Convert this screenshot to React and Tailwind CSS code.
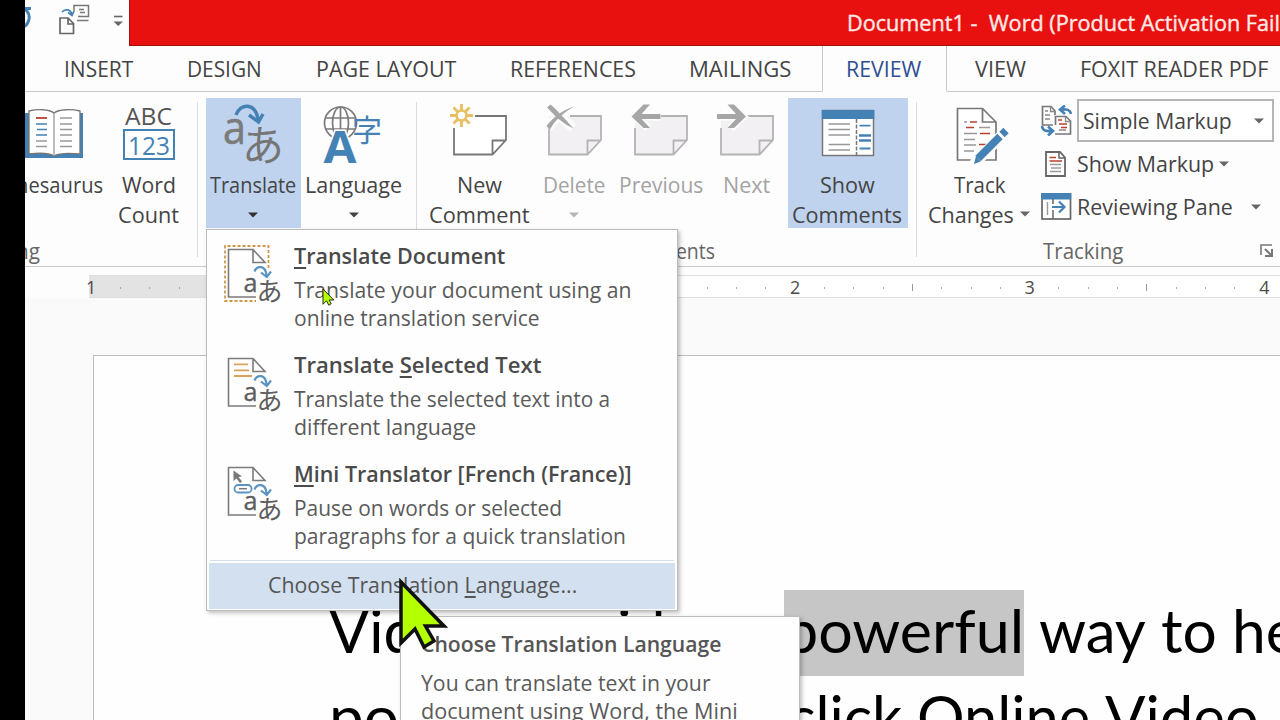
import React, { useLayoutEffect, useRef, useState } from 'react';

// One line of text, condensed or stretched to the width of its box
const Fit = ({ className = '', children }) => {
  const box = useRef(null);
  const text = useRef(null);
  const [scale, setScale] = useState(1);

  useLayoutEffect(() => {
    setScale(box.current.clientWidth / text.current.offsetWidth);
  }, []);

  return (
    <span ref={box} className={`block shrink-0 whitespace-nowrap ${className}`}>
      <span ref={text} className="inline-block origin-left" style={{ transform: `scaleX(${scale})` }}>
        {children}
      </span>
    </span>
  );
};

const Caret = ({ className = 'text-[#666]' }) => (
  <svg className={`h-[6px] w-[10px] shrink-0 ${className}`} viewBox="0 0 10 6">
    <path d="M0 0.5H10L5 5.5Z" fill="currentColor" />
  </svg>
);

const Separator = () => <div className="mt-[10px] h-[155px] w-px shrink-0 bg-[#dcdcdc]" />;

/* ---------- Ribbon icons ---------- */

const BookIcon = () => (
  <svg className="h-[72px] w-[60px]" viewBox="0 0 60 72">
    <path d="M0 15H58V60H0Z" fill="#4481b4" />
    <path d="M4 13C12 11 24 11 29 15C34 11 47 11 55 13V56C45 55 34 55 29 58C24 55 12 55 4 56Z" fill="#fff" stroke="#777" strokeWidth="1.3" />
    <path d="M29 15V58" stroke="#999" strokeWidth="1.3" />
    <path d="M11 20H22" stroke="#b8412f" strokeWidth="1.8" />
    <path d="M11 26H22M12 31.500H22M11 37H22" stroke="#4481b4" strokeWidth="1.5" />
    <path d="M11 43H22M11 48.500H22M35 20H47M35 26H47M35 31.500H47M35 37H47M35 43H47M35 48.500H47" stroke="#999" strokeWidth="1.300" />
  </svg>
);

const WordCountIcon = () => (
  <div className="flex h-[72px] flex-col items-center pt-[6px] text-[#555]">
    <Fit className="h-[25px] w-[47px] text-[23px] leading-[25px]">ABC</Fit>
    <div className="flex h-[31px] w-[52px] justify-center border-2 border-[#4481b4] bg-white text-[#4481b4]">
      <Fit className="w-[42px] text-[25px] leading-[28px]">123</Fit>
    </div>
  </div>
);

const TranslateIcon = () => (
  <svg className="h-[72px] w-[95px]" viewBox="0 0 95 72">
    <text x="17" y="46" fontSize="45" textLength="23" lengthAdjust="spacingAndGlyphs" fill="#7b7b7b" stroke="#7b7b7b" strokeWidth="0.600">a</text>
    <text x="36" y="63" fontSize="42" fontWeight="400" fill="#757575" fontFamily="Noto Sans CJK JP, sans-serif">あ</text>
    <path d="M30 17C34 5 50 4 52 22" fill="none" stroke="#4481b4" strokeWidth="3.500" />
    <path d="M43 17L52.500 24L57 16" fill="none" stroke="#4481b4" strokeWidth="3.500" />
  </svg>
);

const LanguageIcon = () => (
  <svg className="h-[72px] w-[106px]" viewBox="0 0 106 72">
    <g fill="none" stroke="#7b7b7b" strokeWidth="1.700">
      <circle cx="39.500" cy="25" r="16" />
      <ellipse cx="39.500" cy="25" rx="8" ry="16" />
      <path d="M24 20H55M24 31H55M39.500 9V40" />
    </g>
    <text x="22.500" y="64.500" fontSize="44" fontWeight="700" textLength="33" lengthAdjust="spacingAndGlyphs" fill="#4481b4" stroke="#fdfdfd" strokeWidth="3" paintOrder="stroke">A</text>
    <text x="51" y="43" fontSize="30" fontWeight="400" fill="#4481b4" fontFamily="Noto Sans CJK JP, sans-serif">字</text>
  </svg>
);

const NoteIcon = ({ muted, children }) => (
  <svg className="h-[72px] w-[64px]" viewBox="0 0 64 72">
    <path d="M6 18H58V42L44.500 56.500H6Z" fill={muted ? '#f3f0f4' : '#fff'} />
    <path d="M27 18H58V42L44.500 56.500H6V30M58 42.500H44.500V56.500" fill="none" stroke={muted ? '#b3b3b3' : '#777'} strokeWidth="1.800" />
    {children}
  </svg>
);

const NewNoteIcon = () => (
  <NoteIcon>
    <rect x="0" y="4" width="25" height="25" fill="#fdfdfd" />
    <circle cx="13.500" cy="17.500" r="5" fill="#fff" stroke="#e8bf60" strokeWidth="2.600" />
    <path d="M13.500 6V12M13.500 23V29M2 17.500H8M19 17.500H25M5.500 9.500L9.500 13.500M17.500 21.500L21.500 25.500M5.500 25.500L9.500 21.500M17.500 13.500L21.500 9.500" stroke="#e8bf60" strokeWidth="2.800" />
  </NoteIcon>
);

const DeleteNoteIcon = () => (
  <NoteIcon muted>
    <path d="M5 8L30 30M31 9C20 14 10 22 5 30" stroke="#fdfdfd" strokeWidth="9" fill="none" />
    <path d="M4 9.500L7.500 6.500C16 14 22 21 30.500 30.500C20 26 11 17 4 9.500Z" fill="#a6a6a6" />
    <path d="M31 8.500C20 15 12 22 7 31.500L3.500 28C10 19 20 12 31 8.500Z" fill="#a6a6a6" />
  </NoteIcon>
);

const PreviousNoteIcon = () => (
  <NoteIcon muted>
    <path d="M32 18.500H6M19 7L7 18.500L19 30" fill="none" stroke="#fdfdfd" strokeWidth="8" />
    <path d="M31.500 16H12.500L21 6.500H14.500L2.500 18.500L14.500 30H21L12.500 21H31.500Z" fill="#a6a6a6" />
  </NoteIcon>
);

const NextNoteIcon = () => (
  <NoteIcon muted>
    <path d="M2 18.500H28M16 7L28 18.500L16 30" fill="none" stroke="#fdfdfd" strokeWidth="8" />
    <path d="M2 16H21L12.500 6.500H19L31 18.500L19 30H12.500L21 21H2Z" fill="#a6a6a6" />
  </NoteIcon>
);

const ShowCommentsIcon = () => (
  <svg className="h-[72px] w-[64px]" viewBox="0 0 64 72">
    <rect x="6.500" y="12.500" width="51" height="45" fill="#fff" stroke="#777" strokeWidth="1.500" />
    <rect x="5.800" y="12" width="52.500" height="9" fill="#4481b4" />
    <path d="M12.500 26H34M12.500 31.500H34M12.500 37H34M12.500 46.500H34M12.500 52H34" stroke="#999" strokeWidth="1.500" />
    <path d="M40.500 21V57" stroke="#777" strokeWidth="1.500" strokeDasharray="4 1.500" />
    <path d="M43.500 27.700H54.500M43.500 50.500H54.500" stroke="#4481b4" strokeWidth="1.800" />
    <path d="M43 37.500H55M43 42.500H55" stroke="#4481b4" strokeWidth="2.600" />
  </svg>
);

const TrackChangesIcon = () => (
  <svg className="h-[72px] w-[64px]" viewBox="0 0 64 72">
    <path d="M10.500 10.500H35.500L49 24V62H10.500Z" fill="#fff" stroke="#777" strokeWidth="1.700" />
    <path d="M35.500 10.500V24H49" fill="none" stroke="#777" strokeWidth="1.700" />
    <path d="M17 24H20M17 35.500H30M17 41.500H28M17 47H29M17 53H27M32 29.500H43" stroke="#999" strokeWidth="1.400" />
    <path d="M23 24H30M19 29.500H27M33 35.500H43M32 46.500H39" stroke="#b8412f" strokeWidth="1.700" />
    <path d="M27 66L61 31" stroke="#fdfdfd" strokeWidth="11" />
    <path d="M27 66L29 58L33.500 63.500Z" fill="#4481b4" />
    <path d="M31 60.500L53 38.500M55 36.500L59 32.500" stroke="#4481b4" strokeWidth="7.500" />
  </svg>
);

const SimpleMarkupIcon = () => (
  <svg className="h-[31px] w-[31px]" viewBox="0 0 31 31">
    <path d="M12 20H1.500V1.500H10L14 6V10" fill="none" stroke="#777" strokeWidth="1.700" />
    <path d="M9.500 1.500V6.500H14M4 6H7M4 10H9M4 14H9" fill="none" stroke="#888" strokeWidth="1.300" />
    <path d="M14 29H29.500V16L25 11.500H14.500V20" fill="#fff" stroke="#777" strokeWidth="1.700" />
    <path d="M24.500 11.500V16.500H29M18 25H25" fill="none" stroke="#888" strokeWidth="1.300" />
    <path d="M17 15H21M18 19H26M20 22.500H26" stroke="#b8412f" strokeWidth="1.600" />
    <path d="M30 9C29 4.500 26 4 20 4.500M24 0.500L19 4.500L24 9" fill="none" stroke="#4481b4" strokeWidth="2.600" />
    <path d="M1 21C1.500 26 5 26.500 11 26M7 21.500L12 26L7 30.500" fill="none" stroke="#4481b4" strokeWidth="2.600" />
  </svg>
);

const ShowMarkupIcon = () => (
  <svg className="h-[26px] w-[31px]" viewBox="0 0 31 26">
    <path d="M5 1H19L24 6.500V25H5Z" fill="#fff" stroke="#666" strokeWidth="1.800" />
    <path d="M18 1V7H24" fill="none" stroke="#666" strokeWidth="1.500" />
    <path d="M8.500 6.500H15M8.500 10H21" stroke="#b8412f" strokeWidth="1.700" />
    <path d="M9 13.500H20M10 17H20M9 20.500H20" stroke="#999" strokeWidth="1.400" />
  </svg>
);

const ReviewingPaneIcon = () => (
  <svg className="h-[27px] w-[31px]" viewBox="0 0 31 27">
    <rect x="1" y="1" width="28.500" height="25" fill="#fff" stroke="#666" strokeWidth="1.700" />
    <rect x="0.200" y="0" width="30" height="6.500" fill="#4481b4" />
    <path d="M6.500 9V22" stroke="#999" strokeWidth="1.400" />
    <path d="M12 6V11M12 17V26" stroke="#666" strokeWidth="1.500" />
    <path d="M11 14H23M18 8.500L23.500 14L18 19.500" fill="none" stroke="#4481b4" strokeWidth="2.200" />
  </svg>
);

/* ---------- Menu icons ---------- */

const MenuIcon = ({ children }) => (
  <svg className="-mt-px h-[66px] w-[62px] shrink-0" viewBox="0 0 62 66">
    {children}
    <path d="M34 56H6.500V8.500H31L43 21.500H31V8.500" fill="none" stroke="#7b7b7b" strokeWidth="1.600" />
    <path d="M32.500 30.500C35 24 44 24 44.500 35M39 31.500L44.800 36L49 30.500" fill="none" stroke="#5b93c3" strokeWidth="2.200" />
    <text x="21.500" y="50.500" fontSize="26" textLength="14" lengthAdjust="spacingAndGlyphs" fill="#5e5e5e" stroke="#5e5e5e" strokeWidth="0.400">a</text>
    <text x="34.500" y="60" fontSize="26" fontWeight="400" fill="#5e5e5e" fontFamily="Noto Sans CJK JP, sans-serif">あ</text>
  </svg>
);

const DocumentMark = () => (
  <path d="M46.500 27V5H3V60H34" fill="none" stroke="#d2964a" strokeWidth="1.800" strokeDasharray="3 2" />
);

const SelectionMark = () => (
  <path d="M12 14.300H26M12 20.300H27M12 26H30" stroke="#d9a35c" strokeWidth="1.800" />
);

const MiniMark = () => (
  <g>
    <path d="M11.500 11.500V22L14.500 19.500L18 24L20 22.500L16.500 18L20 17.500Z" fill="#777" />
    <rect x="12.500" y="26" width="17" height="7.500" rx="3.500" fill="#fff" stroke="#5b93c3" strokeWidth="1.800" />
    <path d="M17 29.700H25" stroke="#777" strokeWidth="1.500" />
  </g>
);

/* ---------- Ribbon pieces ---------- */

const BigButton = ({ icon, className = '', children }) => (
  <div className={`flex h-[130px] shrink-0 flex-col items-center ${className}`}>
    <div className="flex h-[71px] justify-center">{icon}</div>
    {children}
  </div>
);

const Tab = ({ width, label, className = '' }) => (
  <div className={`flex h-[46px] shrink-0 justify-center border-b border-[#c9c9c9] text-[22.5px] leading-[46px] ${width} ${className}`}>
    {label}
  </div>
);

const TitleBar = () => (
  <div className="flex h-[46px] shrink-0">
    <div className="flex w-[104px] shrink-0">
      <svg className="h-[46px] w-[104px]" viewBox="0 0 104 46">
        <path d="M-4 10C1 8 5 13 4 19C3 24 0 27 -4 27" fill="none" stroke="#4481b4" strokeWidth="3" />
        <path d="M0 8.500H6" stroke="#4481b4" strokeWidth="3" />
        <path d="M35 18H43L48.500 23.500V33.500H35ZM43 18V24H48.500" fill="none" stroke="#666" strokeWidth="1.700" />
        <path d="M49 11V5.500H63.500V16.500H53M52 20.500H63.500M54 9.500H59M55 12.500H60" fill="none" stroke="#777" strokeWidth="1.500" />
        <path d="M37 12C40 8.500 46 9 47 15M43 12.500L47 15.500L49 11" fill="none" stroke="#4481b4" strokeWidth="1.700" />
        <path d="M89 16.500H97.500" stroke="#666" strokeWidth="1.600" />
        <path d="M88.500 21.500H98L93.200 26Z" fill="#666" />
      </svg>
    </div>
    <div className="h-[46px] grow overflow-hidden border-b border-l border-[#a01010] bg-[#e8110f] pl-[717px] text-[22px] leading-[45px] text-[#ffe9e6] [-webkit-text-stroke:0.4px_#ffe9e6]">
      <Fit className="w-[465px] whitespace-pre">{'Document1 -  Word (Product Activation Failed)'}</Fit>
    </div>
  </div>
);

const TabRow = () => (
  <div className="flex h-[46px] shrink-0 text-[#444]">
    <div className="w-[13px] shrink-0 border-b border-[#c9c9c9]" />
    <Tab width="w-[121px]" label={<Fit className="w-[69px]">INSERT</Fit>} />
    <Tab width="w-[130px]" label={<Fit className="w-[75px]">DESIGN</Fit>} />
    <Tab width="w-[194px]" label={<Fit className="w-[140px]">PAGE LAYOUT</Fit>} />
    <Tab width="w-[179px]" label={<Fit className="w-[126px]">REFERENCES</Fit>} />
    <Tab width="w-[160px]" className="pr-[4px]" label={<Fit className="w-[102px]">MAILINGS</Fit>} />
    <Tab width="w-[125px]" className="border-x border-b-transparent pr-[2px] text-[#2f4f94]" label={<Fit className="w-[75px]">REVIEW</Fit>} />
    <Tab width="w-[107px]" label={<Fit className="w-[51px]">VIEW</Fit>} />
    <Tab width="w-[239px]" label={<Fit className="w-[188px]">FOXIT READER PDF</Fit>} />
  </div>
);

const Ribbon = () => (
  <div className="flex h-[175px] shrink-0 border-b border-[#c9c9c9] text-[22px] leading-[30px] text-[#444]">
    {/* Proofing */}
    <div className="flex w-[172px] shrink-0 flex-col pt-[6px]">
      <div className="flex h-[137px]">
        <div className="flex h-[130px] w-[78px] shrink-0 flex-col items-end overflow-hidden">
          <div className="flex h-[71px] w-full justify-start">
            <BookIcon />
          </div>
          <Fit className="w-[98px]">Thesaurus</Fit>
        </div>
        <BigButton className="w-[91px]" icon={<WordCountIcon />}>
          <Fit className="w-[54px]">Word</Fit>
          <Fit className="w-[61px]">Count</Fit>
        </BigButton>
      </div>
      <div className="flex w-[15px] justify-end overflow-hidden text-[#666]">
        <Fit className="w-[82px]">Proofing</Fit>
      </div>
    </div>
    <Separator />

    {/* Language */}
    <div className="flex w-[218px] shrink-0 pl-[8px] pt-[6px]">
      <BigButton className="w-[95px] bg-[#bfd3ee]" icon={<TranslateIcon />}>
        <Fit className="mr-[2px] w-[86px]">Translate</Fit>
        <Caret className="mr-px mt-[13px] text-[#333]" />
      </BigButton>
      <BigButton className="w-[106px]" icon={<LanguageIcon />}>
        <Fit className="mr-px w-[97px]">Language</Fit>
        <Caret className="mt-[13px]" />
      </BigButton>
    </div>
    <Separator />

    {/* Comments */}
    <div className="flex w-[499px] shrink-0 flex-col pt-[6px]">
      <div className="flex h-[137px]">
        <BigButton className="w-[125px]" icon={<NewNoteIcon />}>
          <Fit className="w-[45px]">New</Fit>
          <Fit className="w-[101px]">Comment</Fit>
        </BigButton>
        <BigButton className="w-[65px] text-[#a3a3a3]" icon={<DeleteNoteIcon />}>
          <Fit className="mr-px w-[62px]">Delete</Fit>
          <Caret className="mr-px mt-[13px] text-[#b5b5b5]" />
        </BigButton>
        <BigButton className="w-[108px] text-[#a3a3a3]" icon={<PreviousNoteIcon />}>
          <Fit className="mr-px w-[84px]">Previous</Fit>
        </BigButton>
        <BigButton className="w-[64px] text-[#a3a3a3]" icon={<NextNoteIcon />}>
          <Fit className="mr-px w-[47px]">Next</Fit>
        </BigButton>
        <BigButton className="ml-[9px] w-[120px] bg-[#bfd3ee]" icon={<ShowCommentsIcon />}>
          <Fit className="mr-[2px] w-[55px]">Show</Fit>
          <Fit className="mr-[2px] w-[110px]">Comments</Fit>
        </BigButton>
      </div>
      <div className="flex w-[298px] justify-end text-[#666]">
        <Fit className="w-[99px]">Comments</Fit>
      </div>
    </div>
    <Separator />

    {/* Tracking */}
    <div className="flex w-[363px] shrink-0 flex-col pt-[6px]">
      <div className="flex h-[137px]">
        <BigButton className="w-[124px]" icon={<TrackChangesIcon />}>
          <Fit className="w-[51px]">Track</Fit>
          <div className="flex items-center gap-[6px]">
            <Fit className="w-[86px]">Changes</Fit>
            <Caret />
          </div>
        </BigButton>
        <div className="flex flex-col pt-px">
          <div className="flex h-[43px] items-center">
            <SimpleMarkupIcon />
            <div className="ml-[5px] flex h-[43px] w-[197px] items-center justify-between border-2 border-[#b5b5b5] bg-white pl-[4px] pr-[8px]">
              <Fit className="mb-[2px] w-[149px]">Simple Markup</Fit>
              <Caret />
            </div>
          </div>
          <div className="flex h-[43px] items-center gap-[5px]">
            <ShowMarkupIcon />
            <Fit className="mb-[2px] w-[137px]">Show Markup</Fit>
            <Caret />
          </div>
          <div className="flex h-[43px] items-center gap-[5px]">
            <ReviewingPaneIcon />
            <Fit className="mb-px w-[156px]">Reviewing Pane</Fit>
            <Caret className="ml-[13px] text-[#666]" />
          </div>
        </div>
      </div>
      <div className="flex items-center justify-between pl-[126px] pr-[7px] text-[#666]">
        <Fit className="w-[80px]">Tracking</Fit>
        <svg className="h-[13px] w-[13px]" viewBox="0 0 13 13">
          <path d="M1 11V1H12" fill="none" stroke="#777" strokeWidth="1.600" />
          <path d="M5 5L11 11M12 5V12H5" fill="none" stroke="#777" strokeWidth="2" />
        </svg>
      </div>
    </div>
  </div>
);

const inches = ['1', '', '1', '2', '3', '4'];

const Ruler = () => (
  <div className="h-[31px] shrink-0 pt-[8px]">
    <div className="relative h-[23px]">
      <div className="ml-[64px] h-[23px] border-y border-[#dedede] bg-white">
        <div className="h-[21px] w-[238px] bg-[#e3e3e3]" />
      </div>
      <div className="absolute left-[51.500px] top-px flex h-[23px] items-center">
        {Array.from({ length: 41 }, (_, i) => (
          <div key={i} className="flex w-[29.330px] shrink-0 justify-center text-[18px] font-medium leading-[23px] text-[#4a4a4a]">
            {i % 8 === 0 && inches[i / 8]}
            {i % 8 === 4 && <span className="h-[7px] w-px bg-[#999]" />}
            {i % 4 !== 0 && <span className="h-[2px] w-px bg-[#aaa]" />}
          </div>
        ))}
      </div>
    </div>
  </div>
);

const Page = () => (
  <div className="grow bg-[#fafafa] pl-[68px] pt-[57px]">
    <div className="h-[400px] border-l border-t border-[#bdbdbd] bg-[#fefefe] pl-[235px] pt-[234px] font-[Lato,sans-serif] text-[60.5px] leading-[79px] text-black">
      <div className="flex h-[86px] gap-[15px]">
        <Fit className="w-[153px]">Video</Fit>
        <Fit className="w-[227px]">provides</Fit>
        <Fit className="w-[31px]">a</Fit>
        <Fit className="-ml-px h-[86px] w-[240px] bg-[#c6c6c6]">powerful</Fit>
        <Fit className="w-[107px]">way</Fit>
        <Fit className="w-[56px]">to</Fit>
        <Fit className="w-[114px]">help</Fit>
      </div>
      <div className="flex h-[86px] gap-[15px]">
        <Fit className="w-[156px]">point.</Fit>
        <Fit className="w-[159px]">When</Fit>
        <Fit className="w-[98px]">you</Fit>
        <Fit className="w-[115px]">click</Fit>
        <Fit className="w-[173px]">Online</Fit>
        <Fit className="w-[167px]">Video,</Fit>
      </div>
    </div>
  </div>
);

const MenuItem = ({ icon, title, children }) => (
  <div className="flex h-[109px] pl-[15px] pt-[12px] text-[21px] leading-[28px] text-[#5a5a5a]">
    <MenuIcon>{icon}</MenuIcon>
    <div className="ml-[10px]">
      <div className="mb-[6px] font-semibold text-[#4a4a4a]">{title}</div>
      {children}
    </div>
  </div>
);

const Key = ({ children }) => (
  <span className="underline decoration-2 underline-offset-3">{children}</span>
);

const TranslateMenu = () => (
  <div className="absolute left-[206px] top-[229px] h-[382px] w-[472px] border border-[#bcbcbc] bg-[#fefefe] shadow-[2px_2px_4px_rgba(0,0,0,0.25)]">
    <MenuItem icon={<DocumentMark />} title={<Fit className="w-[211px]"><Key>T</Key>ranslate Document</Fit>}>
      <Fit className="w-[337px]">Translate your document using an</Fit>
      <Fit className="w-[246px]">online translation service</Fit>
    </MenuItem>
    <MenuItem icon={<SelectionMark />} title={<Fit className="w-[247px]">Translate <Key>S</Key>elected Text</Fit>}>
      <Fit className="w-[316px]">Translate the selected text into a</Fit>
      <Fit className="w-[182px]">different language</Fit>
    </MenuItem>
    <MenuItem icon={<MiniMark />} title={<Fit className="w-[338px]"><Key>M</Key>ini Translator [French (France)]</Fit>}>
      <Fit className="w-[268px]">Pause on words or selected</Fit>
      <Fit className="w-[332px]">paragraphs for a quick translation</Fit>
    </MenuItem>
    <div className="mx-[3px] mt-[3px] h-px bg-[#d3dfea]" />
    <div className="mx-[2px] mt-[2px] h-[46px] bg-[#d3e0f0] pl-[59px] text-[21px] leading-[44px] text-[#555]">
      <Fit className="w-[309px]">Choose Translation <Key>L</Key>anguage...</Fit>
    </div>
  </div>
);

const Tooltip = () => (
  <div className="absolute left-[400px] top-[616px] h-[150px] w-[400px] border border-[#bcbcbc] bg-[#fefefe] pl-[20px] pt-[13px] text-[21px] leading-[28px] text-[#5a5a5a] shadow-[2px_2px_4px_rgba(0,0,0,0.25)]">
    <Fit className="mb-[11px] w-[300px] font-semibold text-[#555]">Choose Translation Language</Fit>
    <Fit className="w-[290px]">You can translate text in your</Fit>
    <Fit className="w-[317px]">document using Word, the Mini</Fit>
  </div>
);

const Pointer = ({ className }) => (
  <svg className={`absolute ${className}`} viewBox="0 0 50 72">
    <path d="M3 4V65L17 51L26 69L36 63L27.500 48H46Z" fill="#b4ff00" stroke="#111" strokeWidth="3.500" />
  </svg>
);

const App = () => (
  <div className="relative flex h-[720px] w-[1280px] overflow-hidden bg-black font-['Open_Sans','Noto_Sans',sans-serif]">
    <div className="w-[25px] shrink-0 bg-black" />
    <div className="flex w-[1255px] shrink-0 flex-col overflow-hidden bg-[#fdfdfd]">
      <TitleBar />
      <TabRow />
      <Ribbon />
      <Ruler />
      <Page />
    </div>
    <TranslateMenu />
    <Tooltip />
    <Pointer className="left-[398px] top-[578px] h-[72px] w-[50px]" />
    <Pointer className="left-[322px] top-[288px] h-[18px] w-[13px]" />
  </div>
);

export default App;
